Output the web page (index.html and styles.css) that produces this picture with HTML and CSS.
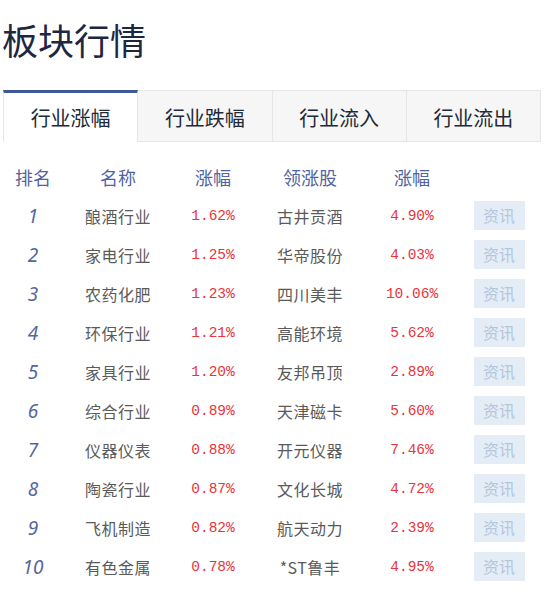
FILE: index.html
```html
<!DOCTYPE html>
<html lang="zh">
<head>
<meta charset="utf-8">
<link rel="stylesheet" href="styles.css">
</head>
<body>
<div class="page">
  <h1 class="title">板块行情</h1>
  <div class="tabs">
    <div class="tab active">行业涨幅</div>
    <div class="tab">行业跌幅</div>
    <div class="tab">行业流入</div>
    <div class="tab">行业流出</div>
  </div>
  <div class="table">
    <div class="row head">
      <div>排名</div><div>名称</div><div>涨幅</div><div>领涨股</div><div>涨幅</div><div></div>
    </div>
    <div class="row"><div class="rank">1</div><div class="name">酿酒行业</div><div class="pct">1.62%</div><div class="name">古井贡酒</div><div class="pct">4.90%</div><div><span class="btn">资讯</span></div></div>
    <div class="row"><div class="rank">2</div><div class="name">家电行业</div><div class="pct">1.25%</div><div class="name">华帝股份</div><div class="pct">4.03%</div><div><span class="btn">资讯</span></div></div>
    <div class="row"><div class="rank">3</div><div class="name">农药化肥</div><div class="pct">1.23%</div><div class="name">四川美丰</div><div class="pct">10.06%</div><div><span class="btn">资讯</span></div></div>
    <div class="row"><div class="rank">4</div><div class="name">环保行业</div><div class="pct">1.21%</div><div class="name">高能环境</div><div class="pct">5.62%</div><div><span class="btn">资讯</span></div></div>
    <div class="row"><div class="rank">5</div><div class="name">家具行业</div><div class="pct">1.20%</div><div class="name">友邦吊顶</div><div class="pct">2.89%</div><div><span class="btn">资讯</span></div></div>
    <div class="row"><div class="rank">6</div><div class="name">综合行业</div><div class="pct">0.89%</div><div class="name">天津磁卡</div><div class="pct">5.60%</div><div><span class="btn">资讯</span></div></div>
    <div class="row"><div class="rank">7</div><div class="name">仪器仪表</div><div class="pct">0.88%</div><div class="name">开元仪器</div><div class="pct">7.46%</div><div><span class="btn">资讯</span></div></div>
    <div class="row"><div class="rank">8</div><div class="name">陶瓷行业</div><div class="pct">0.87%</div><div class="name">文化长城</div><div class="pct">4.72%</div><div><span class="btn">资讯</span></div></div>
    <div class="row"><div class="rank">9</div><div class="name">飞机制造</div><div class="pct">0.82%</div><div class="name">航天动力</div><div class="pct">2.39%</div><div><span class="btn">资讯</span></div></div>
    <div class="row"><div class="rank">10</div><div class="name">有色金属</div><div class="pct">0.78%</div><div class="name">*ST鲁丰</div><div class="pct">4.95%</div><div><span class="btn">资讯</span></div></div>
  </div>
</div>
</body>
</html>
```

FILE: styles.css
```css
* { box-sizing: border-box; }
body {
  margin: 0;
  background: #fff;
  font-family: "Noto Sans CJK SC", "Noto Sans", sans-serif;
}
.page {
  width: 553px;
  padding: 0 12px 0 2px;
}
.title {
  margin: 0;
  padding-top: 14px;
  height: 90px;
  font-size: 36px;
  line-height: 50px;
  font-weight: 400;
  color: #1d2740;
}
.tabs {
  display: flex;
  margin-left: 1px;
  height: 52px;
}
.tab {
  flex: 1;
  display: flex;
  align-items: center;
  justify-content: center;
  background: #f6f6f6;
  border: 1px solid #e6e6e6;
  border-left: none;
  font-size: 20px;
  color: #222a38;
  padding-top: 2px;
}
.tab.active {
  background: #fff;
  border-top: 3px solid #3f5897;
  border-left: 1px solid #e6e6e6;
  border-bottom: none;
  padding-top: 0;
}
.table {
  padding-top: 16px;
}
.row {
  display: grid;
  grid-template-columns: 62px 108px 82px 112px 92px 82px;
  height: 39px;
  align-items: center;
  text-align: center;
}
.row.head {
  height: 38px;
  font-size: 18px;
  color: #5064a3;
}
.rank {
  font-family: "Noto Sans", sans-serif;
  font-style: italic;
  font-size: 19px;
  color: #55669e;
}
.name {
  font-size: 16px;
  color: #5a5a5a;
  letter-spacing: 0.5px;
}
.pct {
  font-family: "Liberation Mono", monospace;
  font-size: 14.5px;
  color: #e8353d;
}
.btn {
  display: inline-block;
  width: 51px;
  height: 29px;
  line-height: 29px;
  background: #e4edf6;
  color: #b4c6dc;
  font-size: 16px;
}
```
